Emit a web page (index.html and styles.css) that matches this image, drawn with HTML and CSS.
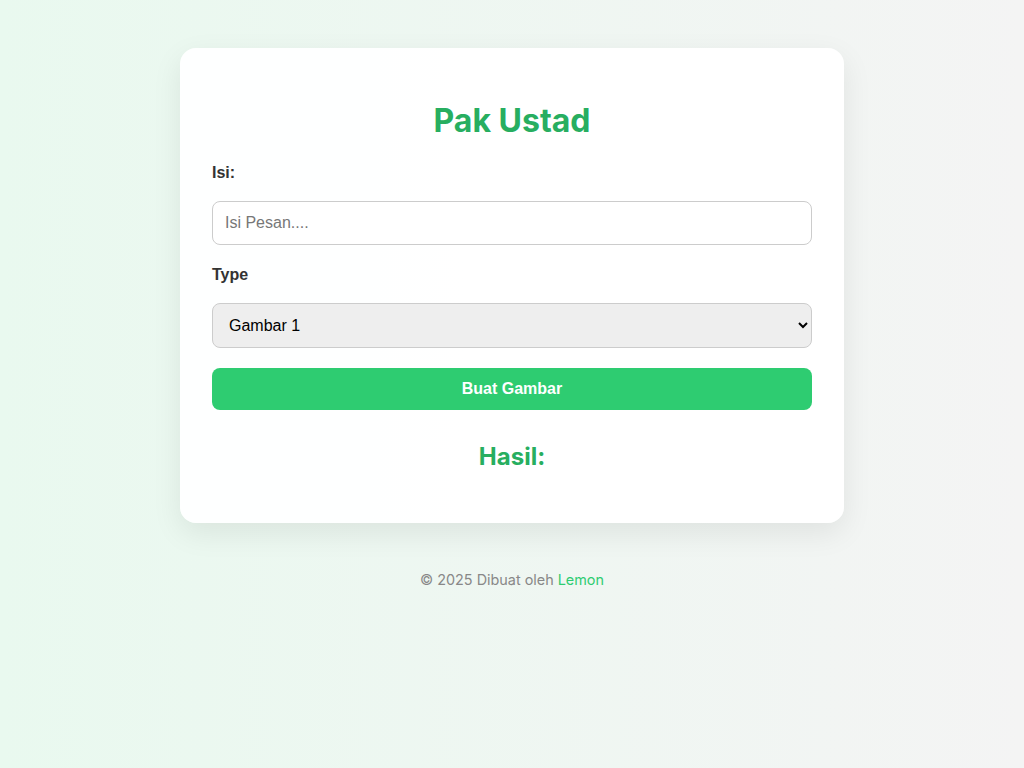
FILE: index.html
```html
<!DOCTYPE html>
<html lang="id">
  <head>
    <meta charset="UTF-8" />
    <meta name="viewport" content="width=device-width, initial-scale=1.0" />
    <title>Pak Ustad</title>
    <link rel="stylesheet" href="styles.css">
  </head>
  <body>
    <main class="card">
      <h1 class="title">Pak Ustad</h1>

      <form class="form" onsubmit="return false">
        <label for="isi" class="label">Isi:</label>
        <input id="isi" class="input" type="text" placeholder="Isi Pesan...." />

        <label for="type" class="label">Type</label>
        <select id="type" class="select">
          <option>Gambar 1</option>
          <option>Gambar 2</option>
          <option>Gambar 3</option>
        </select>

        <button type="submit" class="btn">Buat Gambar</button>
      </form>

      <h2 class="result-title">Hasil:</h2>
    </main>

    <footer class="footer">
      &copy; 2025 Dibuat oleh <a href="#" class="footer-link">Lemon</a>
    </footer>
  </body>
</html>
```

FILE: styles.css
```css
* {
  margin: 0;
  padding: 0;
  box-sizing: border-box;
}

body {
  font-family: "Inter", "Liberation Sans", sans-serif;
  color: #333;
  background: linear-gradient(to right, #e9f9ef 0%, #f4f4f4 100%);
  min-height: 100vh;
  padding-top: 48px;
}

/* Card */
.card {
  width: 664px;
  margin: 0 auto;
  padding: 32px;
  background: rgba(255, 255, 255, 0.95);
  border-radius: 16px;
  box-shadow: 0 10px 30px rgba(0, 0, 0, 0.08);
}

.title {
  font-size: 32px;
  font-weight: 700;
  color: #27ae60;
  text-align: center;
  margin: 21px 0 22px;
  line-height: 39px;
}

/* Form */
.form {
  display: flex;
  flex-direction: column;
  gap: 19px;
}

.label {
  font-family: "Liberation Sans", Arial, sans-serif;
  font-weight: 700;
  font-size: 16px;
  line-height: 19px;
  padding-top: 1px;
  color: #333;
}

.input,
.select {
  width: 100%;
  font-family: "Liberation Sans", Arial, sans-serif;
  font-size: 16px;
  padding: 12px;
  border: 1px solid #ccc;
  border-radius: 8px;
  color: #000;
}

.input {
  height: 44px;
  background: #fff;
}

.input::placeholder {
  color: #777;
}

.select {
  height: 45px;
  background: #eee;
}

.btn {
  height: 42px;
  margin-top: 1px;
  border: none;
  border-radius: 8px;
  background: #2ecc71;
  color: #fff;
  font-family: "Liberation Sans", Arial, sans-serif;
  font-size: 16px;
  font-weight: 700;
  cursor: pointer;
}

.btn:hover {
  background: #27ae60;
}

/* Hasil */
.result-title {
  font-size: 24px;
  font-weight: 700;
  color: #27ae60;
  text-align: center;
  line-height: 29px;
  margin: 32px 0 20px;
}

/* Footer */
.footer {
  text-align: center;
  font-size: 14.4px;
  color: #888;
  margin-top: 48px;
}

.footer-link {
  color: #2ecc71;
  text-decoration: none;
}
```
